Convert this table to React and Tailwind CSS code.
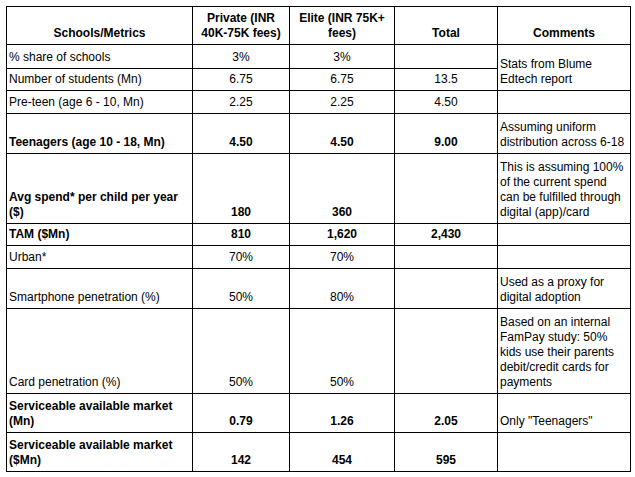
import React from "react";

const rows = [
  { h: 24, bold: false, cells: ["% share of schools", "3%", "3%", ""], comment: { text: ["Stats from Blume", "Edtech report"], span: 2 } },
  { h: 22, bold: false, cells: ["Number of students (Mn)", "6.75", "6.75", "13.5"], comment: null },
  { h: 23, bold: false, cells: ["Pre-teen (age 6 - 10, Mn)", "2.25", "2.25", "4.50"], comment: { text: [""] } },
  { h: 40, bold: true, cells: ["Teenagers (age 10 - 18, Mn)", "4.50", "4.50", "9.00"], comment: { text: ["Assuming uniform", "distribution across 6-18"] } },
  { h: 70, bold: true, cells: [["Avg spend* per child per year", "($)"], "180", "360", ""], comment: { text: ["This is assuming 100%", "of the current spend", "can be fulfilled through", "digital (app)/card"] } },
  { h: 22, bold: true, cells: ["TAM ($Mn)", "810", "1,620", "2,430"], comment: { text: [""] } },
  { h: 23, bold: false, cells: ["Urban*", "70%", "70%", ""], comment: { text: [""] } },
  { h: 40, bold: false, cells: ["Smartphone penetration (%)", "50%", "80%", ""], comment: { text: ["Used as a proxy for", "digital adoption"] } },
  { h: 85, bold: false, cells: ["Card penetration (%)", "50%", "50%", ""], comment: { text: ["Based on an internal", "FamPay study: 50%", "kids use their parents", "debit/credit cards for", "payments"] } },
  { h: 39, bold: true, cells: [["Serviceable available market", "(Mn)"], "0.79", "1.26", "2.05"], comment: { text: ['Only "Teenagers"'] } },
  { h: 39, bold: true, cells: [["Serviceable available market", "($Mn)"], "142", "454", "595"], comment: { text: [""] } },
];

function Lines({ value }) {
  const arr = Array.isArray(value) ? value : [value];
  return arr.map((l, i) => (
    <React.Fragment key={i}>
      {i > 0 && <br />}
      {l}
    </React.Fragment>
  ));
}

const td = "border border-black align-bottom px-[2px] pb-[3px] pt-0 whitespace-nowrap overflow-hidden";

export default function App() {
  return (
    <div className="w-[635px] h-[477px] bg-white pl-[6px] pt-[6px]" style={{ fontFamily: '"Liberation Sans", Arial, sans-serif' }}>
      <table className="table-fixed border-collapse w-[624px] text-[12px] leading-[15px] text-black">
        <colgroup>
          <col className="w-[186px]" />
          <col className="w-[97px]" />
          <col className="w-[105px]" />
          <col className="w-[103px]" />
          <col className="w-[133px]" />
        </colgroup>
        <tbody>
          <tr className="h-[38px] font-bold">
            <td className={td + " text-center"}>Schools/Metrics</td>
            <td className={td + " text-center"}>Private (INR<br />40K-75K fees)</td>
            <td className={td + " text-center"}>Elite (INR 75K+<br />fees)</td>
            <td className={td + " text-center"}>Total</td>
            <td className={td + " text-center"}>Comments</td>
          </tr>
          {rows.map((r, i) => (
            <tr key={i} style={{ height: r.h }}>
              <td className={td + " text-left " + (r.bold ? "font-bold" : "font-normal")}>
                <Lines value={r.cells[0]} />
              </td>
              <td className={td + " text-center " + (r.bold ? "font-bold" : "font-normal")}>{r.cells[1]}</td>
              <td className={td + " text-center " + (r.bold ? "font-bold" : "font-normal")}>{r.cells[2]}</td>
              <td className={td + " text-center " + (r.bold ? "font-bold" : "font-normal")}>{r.cells[3]}</td>
              {r.comment && (
                <td rowSpan={r.comment.span || 1} className={td + " text-left font-normal"}>
                  <Lines value={r.comment.text} />
                </td>
              )}
            </tr>
          ))}
        </tbody>
      </table>
    </div>
  );
}
